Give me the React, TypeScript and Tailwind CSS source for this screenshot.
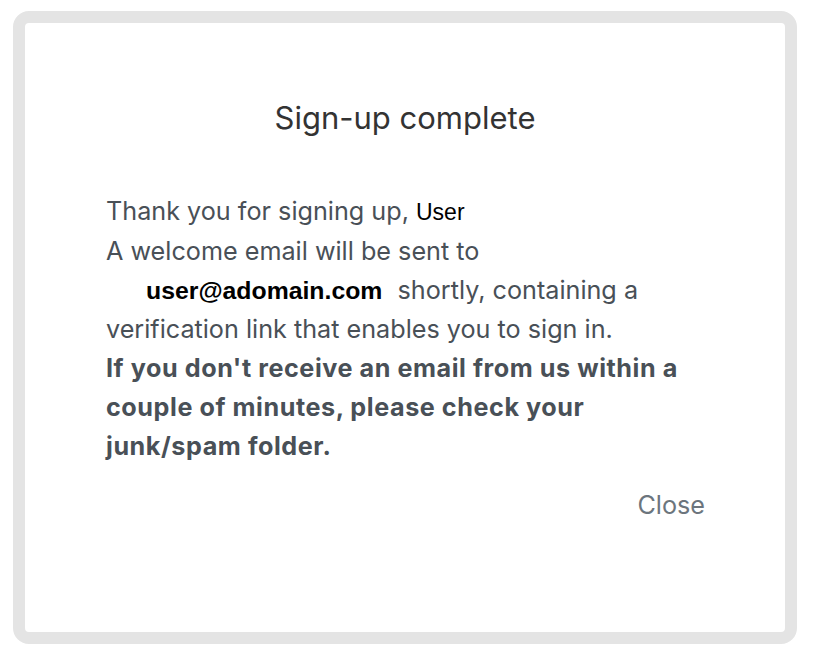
export default function App() {
  return (
    <div className="min-h-screen bg-white pt-[11px] pl-[13px]">
      <div className="w-[784px] h-[633px] rounded-[16px] border-[12px] border-[#e4e4e4] bg-white">
        <div
          className="pt-[77px] pl-[81px] w-[680px]"
          style={{ fontFamily: 'Inter, "Liberation Sans", sans-serif' }}
        >
          <h1 className="ml-[-81px] w-[760px] text-center text-[31px] leading-[36px] font-normal text-[#333333]">
            Sign-up complete
          </h1>

          <div className="mt-[56px] text-[25.2px] leading-[39px] text-[#495057]">
            <p>
              Thank you for signing up,{' '}
              <span
                className="text-[23px] text-black"
                style={{ fontFamily: '"Liberation Sans", Arial, sans-serif' }}
              >
                User
              </span>
            </p>
            <p>A welcome email will be sent to</p>
            <p>
              <span
                className="ml-[40px] mr-[8px] text-[24.8px] font-bold text-black"
                style={{ fontFamily: '"Liberation Sans", Arial, sans-serif' }}
              >
                user@adomain.com
              </span>{' '}
              <span>shortly, containing a</span>
            </p>
            <p>verification link that enables you to sign in.</p>
            <p className="font-bold tracking-[0.55px]">
              If you don't receive an email from us within a couple of minutes, please check your
              junk/spam folder.
            </p>
          </div>

          <div className="mt-[20px] flex justify-end">
            <button className="text-[25.2px] leading-[39px] text-[#6c757d]">Close</button>
          </div>
        </div>
      </div>
    </div>
  )
}
